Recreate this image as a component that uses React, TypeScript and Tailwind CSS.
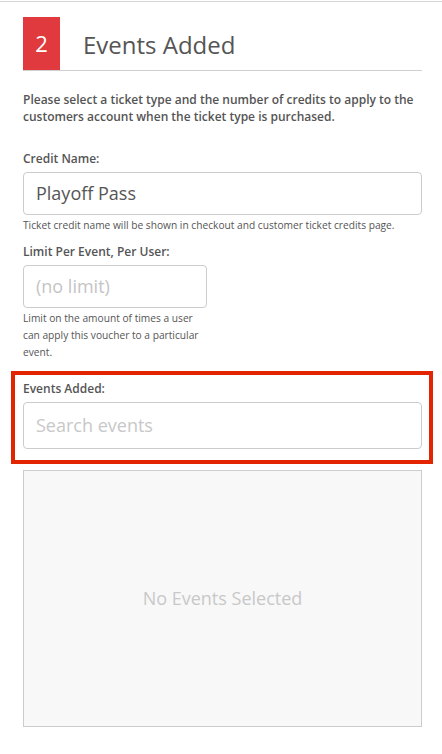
import React from "react";

export default function App() {
  return (
    <div className="w-[442px] min-h-[754px] bg-white font-['Open_Sans',sans-serif] text-[#555]">
      <div className="h-px mt-px bg-[#d6d6d6]" />
      <div className="pl-[23px] pr-[20px]">
        <div className="mt-[15px] flex items-stretch border-b border-[#cfcfcf]">
          <div className="w-[37px] h-[53px] bg-[#e03a3e] text-white text-[22px] flex items-center justify-center">2</div>
          <div className="ml-[23px] flex items-center text-[24px] text-[#555] pt-[2px]">Events Added</div>
        </div>

        <p className="mt-[20px] text-[12px] leading-[17px] font-semibold text-[#555]">
          Please select a ticket type and the number of credits to apply to the customers account when the ticket type is purchased.
        </p>

        <div className="mt-[25px] text-[12px] leading-[17px] font-semibold">Credit Name:</div>
        <div className="mt-[5px] h-[43px] border border-[#cccccc] rounded-[4px] flex items-center px-[12px] text-[18px] text-[#555]">
          Playoff Pass
        </div>
        <div className="mt-[2px] text-[10.2px] leading-[17px]">
          Ticket credit name will be shown in checkout and customer ticket credits page.
        </div>

        <div className="mt-[9px] text-[12px] leading-[17px] font-semibold">Limit Per Event, Per User:</div>
        <div className="mt-[5px] w-[184px] h-[43px] border border-[#cccccc] rounded-[4px] flex items-center px-[12px] text-[18px] text-[#c4c4c4]">
          (no limit)
        </div>
        <div className="mt-[2px] w-[184px] text-[10.2px] leading-[17px]">
          Limit on the amount of times a user can apply this voucher to a particular event.
        </div>

        <div className="mt-[10px] ml-[-12px] mr-[-11px] border-4 border-[#e32400] pl-[8px] pr-[7px] pt-[5px] pb-[11px]">
          <div className="text-[12px] leading-[17px] font-semibold">Events Added:</div>
          <div className="mt-[5px] h-[47px] border border-[#cccccc] rounded-[4px] flex items-center px-[12px] text-[18px] text-[#c8c8c8]">
            Search events
          </div>
        </div>

        <div className="mt-[6px] h-[257px] border border-[#cccccc] bg-[#f8f8f8] flex items-center justify-center text-[18px] text-[#c8c8c8]">
          No Events Selected
        </div>
      </div>
    </div>
  );
}
